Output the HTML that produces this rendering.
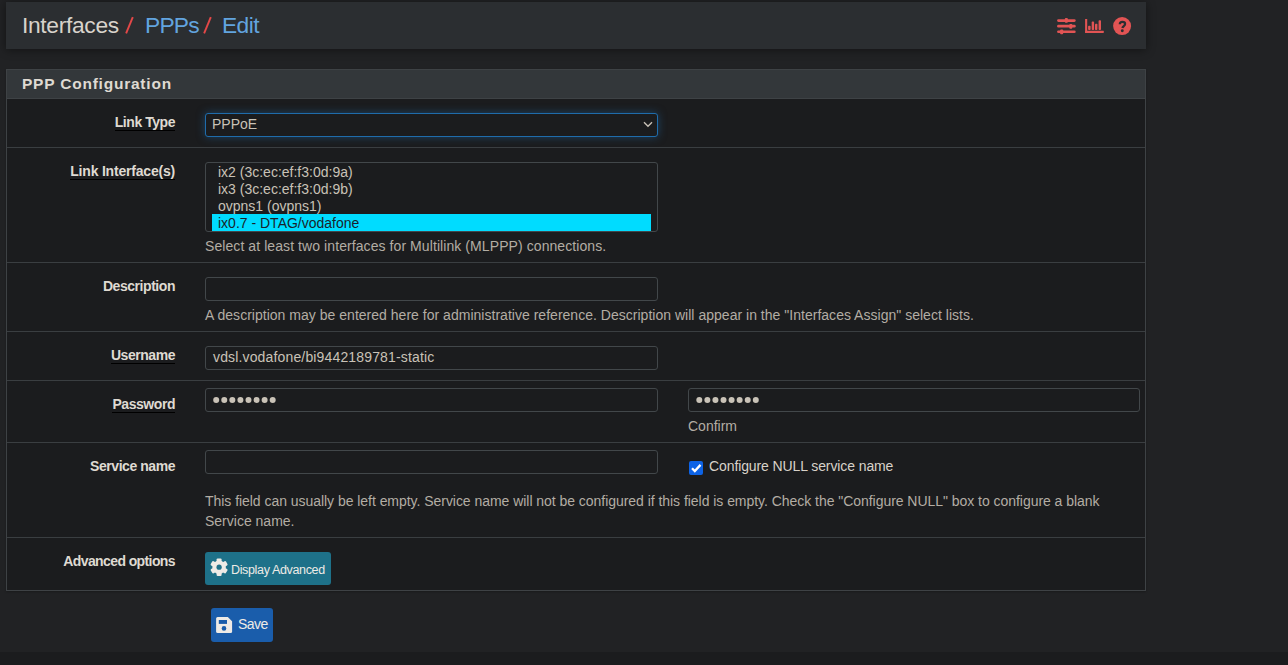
<!DOCTYPE html>
<html><head><meta charset="utf-8">
<style>
html,body{margin:0;padding:0;}
body{width:1288px;height:665px;overflow:hidden;background:#212224;position:relative;font-family:"Liberation Sans",sans-serif;}
.a{position:absolute;white-space:nowrap;}
#hdr{left:6px;top:2px;width:1140px;height:47px;background:#2b2e31;box-shadow:0 1px 9px rgba(0,0,0,.45);}
#panel{left:6px;top:69px;width:1138px;height:520px;background:#1b1c1e;border:1px solid #3e4245;box-shadow:0 1px 2px rgba(0,0,0,.25);}
#ph{left:7px;top:70px;width:1138px;height:28px;background:#33373a;border-bottom:1px solid #3e4245;}
.sep{position:absolute;left:7px;width:1138px;height:1px;background:#3a3e41;}
.lbl{position:absolute;right:1113px;font-size:14px;font-weight:bold;color:#dfdad2;letter-spacing:-0.45px;line-height:14px;white-space:nowrap;}
.u{border-bottom:1px solid #000;}
.help{position:absolute;left:205px;font-size:14px;color:#b3ada4;line-height:14px;white-space:nowrap;}
.inp{position:absolute;left:205px;width:451px;height:22px;border:1px solid #42474a;border-radius:3px;background:#1b1c1e;}
.itxt{position:absolute;font-size:14px;color:#c9c2b7;line-height:14px;white-space:nowrap;}
.crumb{position:absolute;top:14.2px;font-size:22.8px;line-height:22.8px;white-space:nowrap;}
#foot{left:0;top:652px;width:1288px;height:13px;background:#1b1c1e;}
</style></head><body>
<div id="hdr" class="a"></div>
<div class="crumb" style="left:22px;color:#d8d3cb;letter-spacing:-0.33px;">Interfaces</div>
<svg class="a" style="left:110px;top:10px" width="120" height="30" viewBox="110 10 120 30"><g stroke="#e44848" stroke-width="1.9" stroke-linecap="butt"><line x1="126.1" y1="33.4" x2="132.8" y2="17.2"/><line x1="204.1" y1="33.4" x2="210.8" y2="17.2"/></g></svg>
<div class="crumb" style="left:145px;color:#62a4df;letter-spacing:-0.8px;">PPPs</div>
<div class="crumb" style="left:222px;color:#62a4df;letter-spacing:-0.6px;">Edit</div>

<svg class="a" style="left:1050px;top:10px" width="90" height="32" viewBox="1050 10 90 32">
<g fill="#e25454">
<rect x="1057.1" y="19.2" width="18.6" height="2.7" rx="1.3"/>
<rect x="1057.1" y="24.8" width="18.6" height="2.8" rx="1.3"/>
<rect x="1057.1" y="30.5" width="18.6" height="2.6" rx="1.3"/>
<rect x="1064.8" y="18" width="3.1" height="4.8" rx="1"/>
<rect x="1069.3" y="23.9" width="3.0" height="4.9" rx="1"/>
<rect x="1060.1" y="29.5" width="3.1" height="4.7" rx="1"/>
<rect x="1085.1" y="19" width="2.1" height="14"/>
<rect x="1085.1" y="30.8" width="18.7" height="2.2" rx="0.4"/>
<rect x="1088.1" y="25.7" width="2.5" height="4.4" rx="0.8"/>
<rect x="1091.7" y="21.6" width="2.4" height="8.5" rx="0.8"/>
<rect x="1095.0" y="23.7" width="2.4" height="6.4" rx="0.8"/>
<rect x="1098.6" y="20.3" width="2.4" height="9.8" rx="0.8"/>
<circle cx="1122.1" cy="26.1" r="9"/>
</g>
<path d="M1119.8 24.3 C1119.8 22.7 1120.9 21.9 1122.4 21.9 C1124 21.9 1125.1 22.8 1125.1 24.0 C1125.1 25.9 1122.7 26.1 1122.4 28.0" fill="none" stroke="#2b2e31" stroke-width="2.25"/>
<circle cx="1122.3" cy="30.7" r="1.45" fill="#2b2e31"/>
</svg>

<div id="panel" class="a"></div>
<div id="ph" class="a"></div>
<div class="a" style="left:22px;top:76px;font-size:15.5px;line-height:15.5px;font-weight:bold;color:#dfdad2;letter-spacing:0.78px;">PPP Configuration</div>

<div class="sep" style="top:147px"></div>
<div class="sep" style="top:262px"></div>
<div class="sep" style="top:331px"></div>
<div class="sep" style="top:380px"></div>
<div class="sep" style="top:442px"></div>
<div class="sep" style="top:537px"></div>

<div class="lbl" style="top:115px"><span class="u">Link Type</span></div>
<div class="lbl" style="top:164px;letter-spacing:-0.2px"><span class="u">Link Interface(s)</span></div>
<div class="lbl" style="top:279px">Description</div>
<div class="lbl" style="top:348px"><span class="u">Username</span></div>
<div class="lbl" style="top:397px"><span class="u">Password</span></div>
<div class="lbl" style="top:459px">Service name</div>
<div class="lbl" style="top:554px;letter-spacing:-0.6px">Advanced options</div>

<div class="a" style="left:205px;top:113px;width:451px;height:22px;border:1px solid #1f6cab;border-radius:3px;background:#1b1c1e;box-shadow:0 0 8px rgba(31,108,171,.5);"></div>
<div class="itxt" style="left:212px;top:117px;">PPPoE</div>
<svg class="a" style="left:643px;top:121px" width="10" height="7" viewBox="0 0 10 7"><path d="M1 1.2 L5 5.2 L9 1.2" fill="none" stroke="#c9c2b7" stroke-width="1.35"/></svg>

<div class="a" style="left:205px;top:162px;width:451px;height:68px;border:1px solid #42474a;border-radius:3px;background:#1b1c1e;"></div>
<div class="a" style="left:212px;top:214px;width:439px;height:17px;background:#00dcff;"></div>
<div class="itxt" style="left:218px;top:165px;">ix2 (3c:ec:ef:f3:0d:9a)</div>
<div class="itxt" style="left:218px;top:182px;">ix3 (3c:ec:ef:f3:0d:9b)</div>
<div class="itxt" style="left:218px;top:199px;">ovpns1 (ovpns1)</div>
<div class="itxt" style="left:218px;top:216px;color:#1a1f2b;">ix0.7 - DTAG/vodafone</div>
<div class="help" style="top:239px;letter-spacing:0.08px">Select at least two interfaces for Multilink (MLPPP) connections.</div>

<div class="inp" style="top:277px;"></div>
<div class="help" style="top:308px;letter-spacing:0.02px">A description may be entered here for administrative reference. Description will appear in the "Interfaces Assign" select lists.</div>

<div class="inp" style="top:346px;"></div>
<div class="itxt" style="left:213px;top:350px;letter-spacing:0.15px">vdsl.vodafone/bi9442189781-static</div>

<div class="inp" style="top:388px;"></div>
<div class="inp" style="top:388px;left:688px;width:450px;"></div>
<svg class="a" style="left:0;top:380px" width="1288" height="40" viewBox="0 380 1288 40"><g fill="#c9c2b7"><circle cx="216.20" cy="400" r="3.0"/><circle cx="224.27" cy="400" r="3.0"/><circle cx="232.34" cy="400" r="3.0"/><circle cx="240.41" cy="400" r="3.0"/><circle cx="248.48" cy="400" r="3.0"/><circle cx="256.55" cy="400" r="3.0"/><circle cx="264.62" cy="400" r="3.0"/><circle cx="272.69" cy="400" r="3.0"/><circle cx="699.30" cy="400" r="3.0"/><circle cx="707.37" cy="400" r="3.0"/><circle cx="715.44" cy="400" r="3.0"/><circle cx="723.51" cy="400" r="3.0"/><circle cx="731.58" cy="400" r="3.0"/><circle cx="739.65" cy="400" r="3.0"/><circle cx="747.72" cy="400" r="3.0"/><circle cx="755.79" cy="400" r="3.0"/></g></svg>
<div class="help" style="left:688px;top:419px;">Confirm</div>

<div class="inp" style="top:450px;"></div>
<div class="a" style="left:689px;top:461px;width:14px;height:14px;background:#0d63e6;border-radius:2px;"></div>
<svg class="a" style="left:689px;top:461px" width="14" height="14" viewBox="0 0 14 14"><path d="M3 7.2 L5.8 10 L11.5 3.9" fill="none" stroke="#fff" stroke-width="2.3"/></svg>
<div class="itxt" style="left:709px;top:459px;color:#d8d2c9;letter-spacing:-0.1px">Configure NULL service name</div>
<div class="help" style="top:494px;letter-spacing:-0.04px">This field can usually be left empty. Service name will not be configured if this field is empty. Check the "Configure NULL" box to configure a blank</div>
<div class="help" style="top:514px;">Service name.</div>

<div class="a" style="left:205px;top:552px;width:126px;height:33px;background:#1e7189;border-radius:3px;"></div>
<svg class="a" style="left:205px;top:552px" width="30" height="33" viewBox="205 552 30 33">
<g fill="#eeebe6"><circle cx="219.1" cy="567.2" r="6.7"/><rect x="216.6" y="558.4000000000001" width="5" height="17.6" rx="1.1" transform="rotate(0 219.1 567.2)"/><rect x="216.6" y="558.4000000000001" width="5" height="17.6" rx="1.1" transform="rotate(60 219.1 567.2)"/><rect x="216.6" y="558.4000000000001" width="5" height="17.6" rx="1.1" transform="rotate(120 219.1 567.2)"/></g>
<circle cx="219.1" cy="567.2" r="2.6" fill="#1e7189"/>
</svg>
<div class="a" style="left:231px;top:564px;font-size:12.5px;line-height:12.5px;color:#eeebe6;letter-spacing:-0.35px;">Display Advanced</div>

<div class="a" style="left:211px;top:608px;width:62px;height:34px;background:#1a5dab;border-radius:3px;"></div>
<svg class="a" style="left:211px;top:608px" width="25" height="34" viewBox="211 608 25 34">
<path d="M217.6 616.9 H227.8 L232.1 621.2 V631.4 Q232.1 632.9 230.6 632.9 H217.6 Q216.1 632.9 216.1 631.4 V618.4 Q216.1 616.9 217.6 616.9 Z" fill="#eeebe6"/>
<rect x="218.8" y="620" width="8.2" height="3.9" fill="#1a5dab"/>
<circle cx="224" cy="628.4" r="2.3" fill="#1a5dab"/>
</svg>
<div class="a" style="left:238px;top:617px;font-size:14px;line-height:14px;color:#eeebe6;letter-spacing:-0.5px;">Save</div>

<div id="foot" class="a"></div>
</body></html>
